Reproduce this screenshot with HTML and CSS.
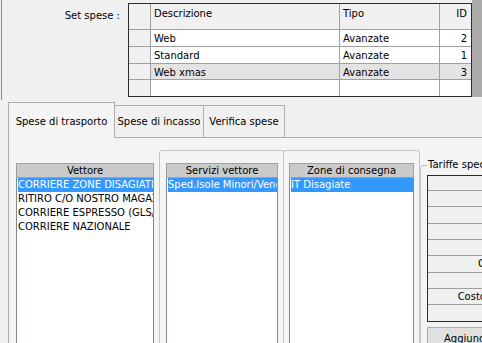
FILE: index.html
```html
<!DOCTYPE html>
<html lang="it">
<head>
    <meta charset="UTF-8">
    <title>Set spese</title>
    <link rel="stylesheet" href="styles.css">
</head>
<body>

<div class="top">
    <div class="set-label">Set spese :</div>
    <div class="set-grid">
        <div class="c rh"></div>
        <div class="c hd">Descrizione</div>
        <div class="c hd">Tipo</div>
        <div class="c hd num">ID</div>

        <div class="c rh"></div>
        <div class="c">Web</div>
        <div class="c">Avanzate</div>
        <div class="c num">2</div>

        <div class="c rh"></div>
        <div class="c">Standard</div>
        <div class="c">Avanzate</div>
        <div class="c num">1</div>

        <div class="c rh"></div>
        <div class="c sel">Web xmas</div>
        <div class="c sel">Avanzate</div>
        <div class="c sel num">3</div>

        <div class="c rh"></div>
        <div class="c"></div>
        <div class="c"></div>
        <div class="c"></div>
    </div>
    <div class="strip"></div>
</div>

<div class="tabs">
    <div class="tab active">Spese di trasporto</div>
    <div class="tab">Spese di incasso</div>
    <div class="tab">Verifica spese</div>
</div>

<div class="page">
    <div class="list vettore">
        <div class="list-head">Vettore</div>
        <ul class="list-items">
            <li class="sel">CORRIERE ZONE DISAGIATE</li>
            <li>RITIRO C/O NOSTRO MAGAZZINO</li>
            <li>CORRIERE ESPRESSO (GLS/SDA)</li>
            <li>CORRIERE NAZIONALE</li>
        </ul>
    </div>

    <div class="group servizi">
        <div class="list">
            <div class="list-head">Servizi vettore</div>
            <ul class="list-items">
                <li class="sel">Sped.Isole Minori/Venezia</li>
            </ul>
        </div>
    </div>

    <div class="group zone">
        <div class="list">
            <div class="list-head">Zone di consegna</div>
            <ul class="list-items">
                <li class="sel">IT Disagiate</li>
            </ul>
        </div>
    </div>

    <fieldset class="tariffe">
        <legend>Tariffe speciali</legend>
        <div class="tar-grid">
            <div class="tc head"></div>
            <div class="tc"></div>
            <div class="tc"></div>
            <div class="tc"></div>
            <div class="tc"></div>
            <div class="tc">Codice</div>
            <div class="tc"></div>
            <div class="tc">Costo fisso</div>
            <div class="tc"></div>
        </div>
        <button class="add-btn">Aggiungi</button>
    </fieldset>
</div>

</body>
</html>
```

FILE: styles.css
```css
body {
    margin: 0;
    width: 482px;
    height: 343px;
    overflow: hidden;
    background-color: #f0f0f0;
    font-family: "DejaVu Sans", sans-serif;
    font-size: 10px;
    color: #000;
}

/* --- set spese --- */
.top {
    display: flex;
    height: 100px;
    margin-left: 1px;
    border-left: 1px solid #8a8a8a;
}
.set-label {
    flex: 0 0 118px;
    text-align: right;
    padding-top: 10px;
}
.set-grid {
    flex: 0 0 auto;
    margin: 3px 0 0 8px;
    align-self: flex-start;
    display: grid;
    grid-template-columns: 22px 189px 100px 31px;
    grid-template-rows: 26px 17px 17px 16px 16px;
    border: 1px solid #2b2b2b;
    background-color: #fff;
}
.c {
    box-sizing: border-box;
    border-right: 1px solid #a0a0a0;
    border-bottom: 1px solid #a0a0a0;
    padding: 2px 3px 0 3px;
    line-height: 13px;
    white-space: nowrap;
    overflow: hidden;
}
.c:nth-child(4n) {
    border-right: none;
}
.c:nth-last-child(-n+4) {
    border-bottom: none;
}
.c.hd, .c.rh {
    background-color: #f0f0f0;
}
.c.hd {
    padding-top: 3px;
}
.c.num {
    text-align: right;
    padding-right: 4px;
}
.c.sel {
    background-color: #e3e3e3;
}
.strip {
    flex: 1;
    height: 97px;
    background-color: #ababab;
}

/* --- tabs --- */
.tabs {
    display: flex;
    align-items: flex-end;
    height: 37px;
    padding-left: 8px;
}
.tab {
    box-sizing: border-box;
    height: 32px;
    margin-left: -1px;
    padding-bottom: 9px;
    display: flex;
    align-items: flex-end;
    justify-content: center;
    border: 1px solid #adadad;
    border-bottom: none;
    line-height: 12px;
}
.tab:nth-child(2) {
    width: 90px;
}
.tab:nth-child(3) {
    width: 82px;
}
.tab.active {
    position: relative;
    z-index: 1;
    width: 107px;
    height: 36px;
    margin-left: 0;
    margin-bottom: -1px;
    padding-bottom: 10px;
    background-color: #f4f4f4;
}

.page {
    display: flex;
    align-items: flex-start;
    height: 240px;
    margin-left: 8px;
    padding: 12px 0 0 7px;
    border-top: 1px solid #adadad;
    border-left: 1px solid #adadad;
    background-color: #f4f4f4;
}

/* --- liste --- */
.list {
    display: flex;
    flex-direction: column;
    height: 240px;
}
.list-head {
    box-sizing: border-box;
    height: 15px;
    border: 1px solid #a0a0a0;
    background-color: #cacaca;
    text-align: center;
    line-height: 13px;
    white-space: nowrap;
}
.list-items {
    flex: 1;
    list-style: none;
    margin: 0;
    padding: 0 0 0 1px;
    border: 1px solid #828790;
    border-top: none;
    background-color: #fff;
}
.list-items li {
    line-height: 14px;
    white-space: nowrap;
    overflow: hidden;
}
.list-items li.sel {
    background-color: #3399ff;
    color: #fff;
}
.vettore {
    flex: none;
    width: 138px;
    margin: 13px 5px 0 0;
}
.group {
    flex: none;
    height: 240px;
    padding-top: 12px;
    border: 1px solid #c5c5c5;
    border-bottom: none;
    border-radius: 3px 3px 0 0;
}
.servizi {
    width: 112px;
    padding-left: 6px;
    padding-right: 5px;
}
.zone {
    width: 125px;
    margin-left: -1px;
    padding-left: 5px;
    padding-right: 5px;
}

/* --- tariffe --- */
.tariffe {
    flex: none;
    margin: 9px 0 0 0;
    padding: 0 0 0 6px;
    width: 140px;
    height: 240px;
    border: 1px solid #c5c5c5;
    border-radius: 3px;
}
.tariffe legend {
    padding: 0 1px;
    line-height: 12px;
}
.tar-grid {
    margin-top: 4px;
    width: 88px;
    border: 1px solid #2b2b2b;
    display: grid;
    grid-template-rows: 15px 16px 17px 16px 16px 17px 16px 16px 16px;
}
.tc {
    box-sizing: border-box;
    border-bottom: 1px solid #a0a0a0;
    background-color: #f0f0f0;
    text-align: right;
    padding-right: 4px;
    line-height: 15px;
    white-space: nowrap;
}
.tc:last-child {
    border-bottom: none;
}
.add-btn {
    margin-top: 5px;
    width: 90px;
    height: 23px;
    padding: 0 0 0 16px;
    text-align: left;
    border: 1px solid #adadad;
    background-color: #e1e1e1;
    font-family: "DejaVu Sans", sans-serif;
    font-size: 10px;
}
```
